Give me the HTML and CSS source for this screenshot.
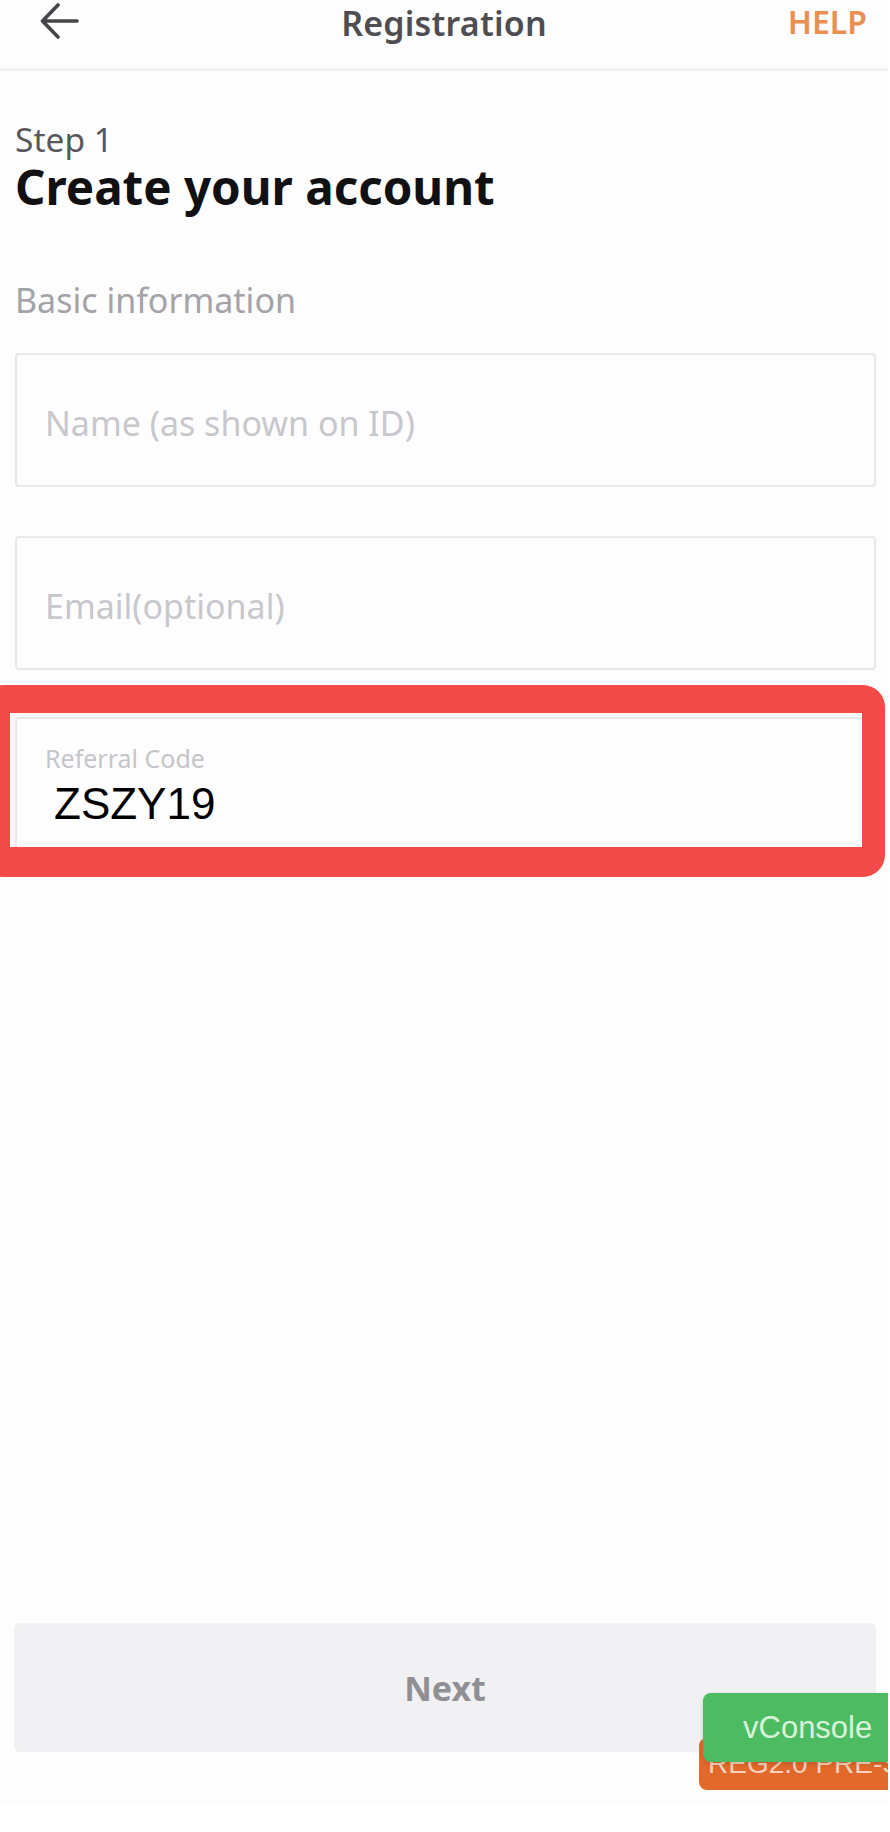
FILE: index.html
```html
<!DOCTYPE html>
<html lang="en">
<head>
<meta charset="utf-8">
<title>Registration</title>
<link rel="stylesheet" href="styles.css">
</head>
<body>
<div class="screen">
  <header class="topbar">
    <button class="back" aria-label="Back">
      <svg width="40" height="40" viewBox="0 0 40 40" fill="none" stroke="#454549" stroke-width="3.6" stroke-linecap="round" stroke-linejoin="round">
        <path d="M37 20H3M18 4L2.5 20L18 36"/>
      </svg>
    </button>
    <h1 class="title">Registration</h1>
    <a class="help">HELP</a>
  </header>

  <main class="content">
    <div class="step">Step 1</div>
    <h2 class="heading">Create your account</h2>
    <div class="section-label">Basic information</div>

    <div class="field"><span class="placeholder">Name (as shown on ID)</span></div>
    <div class="field field-email"><span class="placeholder">Email(optional)</span></div>

    <div class="field-wrap">
      <div class="field field-filled">
        <span class="float-label">Referral Code</span>
        <span class="value">ZSZY19</span>
      </div>
      <div class="highlight"></div>
    </div>
  </main>

  <footer class="actions">
    <button class="next">Next</button>
  </footer>

  <div class="env-badge">REG2.0 PRE-SG</div>
  <div class="vconsole">vConsole</div>
</div>
</body>
</html>
```

FILE: styles.css
```css
* {
  box-sizing: border-box;
}

html, body {
  margin: 0;
  padding: 0;
  background: #ffffff;
}

body {
  font-family: "Noto Sans", "Open Sans", sans-serif;
}

.screen {
  position: relative;
  width: 888px;
  height: 1803px;
  background: #fdfdfe;
  display: flex;
  flex-direction: column;
  overflow: hidden;
}

/* Top bar */
.topbar {
  height: 71px;
  border-bottom: 3px solid #f0f0f3;
  display: grid;
  grid-template-columns: 1fr auto 1fr;
  align-items: start;
}

.back {
  justify-self: start;
  margin: 1px 0 0 40px;
  padding: 0;
  border: 0;
  background: none;
  width: 40px;
  height: 40px;
  display: flex;
}

.title {
  margin: 0;
  font-size: 34px;
  line-height: 46px;
  font-weight: 600;
  color: #4e4e52;
  letter-spacing: 0.2px;
}

.help {
  justify-self: end;
  margin-right: 21px;
  font-size: 32px;
  line-height: 44px;
  font-weight: 600;
  color: #e98f52;
}

/* Content */
.content {
  flex: 1;
  padding: 0 12px 0 15px;
  display: flex;
  flex-direction: column;
}

.step {
  margin-top: 50px;
  font-size: 33.5px;
  line-height: 36px;
  color: #58585c;
}

.heading {
  margin: 6px 0 0;
  font-size: 47.5px;
  line-height: 48px;
  font-weight: 700;
  color: #111114;
}

.section-label {
  margin-top: 69px;
  font-size: 34px;
  line-height: 40px;
  color: #a3a3a8;
}

.field {
  margin-top: 33px;
  height: 134px;
  border: 2px solid #e8e8ec;
  border-radius: 4px;
  background: #fdfdfe;
  display: flex;
  align-items: center;
  padding: 6px 28px 0;
}

.field-email {
  margin-top: 49px;
}

.placeholder {
  font-size: 34px;
  color: #c7c7cc;
}

.field-wrap {
  position: relative;
  margin-top: 47px;
}

.field-filled {
  margin-top: 0;
  flex-direction: column;
  align-items: flex-start;
  padding: 24px 28px 0;
}

.float-label {
  font-size: 25px;
  line-height: 30px;
  color: #c5c5ca;
}

.value {
  margin-top: 6px;
  padding-left: 9px;
  font-family: "Liberation Sans", Arial, sans-serif;
  font-size: 44px;
  line-height: 50px;
  color: #000000;
}

.highlight {
  position: absolute;
  top: -32px;
  left: -33px;
  right: -9px;
  bottom: -26px;
  border-style: solid;
  border-color: #f34b49;
  border-width: 28px 23px 30px 28px;
  border-radius: 22px;
  pointer-events: none;
}

/* Footer */
.actions {
  padding: 0 12px 51px 14px;
}

.next {
  width: 100%;
  height: 129px;
  border: 0;
  border-radius: 6px;
  background: #f1f1f3;
  font-family: "Noto Sans", "Open Sans", sans-serif;
  font-size: 34px;
  font-weight: 700;
  color: #8f8f94;
}

/* Debug overlays */
.env-badge {
  position: absolute;
  left: 699px;
  top: 1738px;
  width: 200px;
  height: 52px;
  border-radius: 8px;
  background: #e2692b;
  color: #f7d2bd;
  font-family: "Liberation Sans", Arial, sans-serif;
  font-size: 28px;
  line-height: 52px;
  padding-left: 9px;
  white-space: nowrap;
  overflow: hidden;
}

.vconsole {
  position: absolute;
  left: 703px;
  top: 1693px;
  width: 200px;
  height: 69px;
  border-radius: 8px;
  background: #4dbb62;
  color: #d6f5d8;
  font-family: "Liberation Sans", Arial, sans-serif;
  font-size: 31px;
  line-height: 69px;
  padding-left: 40px;
  box-shadow: 0 2px 5px rgba(0, 0, 0, 0.15);
  white-space: nowrap;
}
```
